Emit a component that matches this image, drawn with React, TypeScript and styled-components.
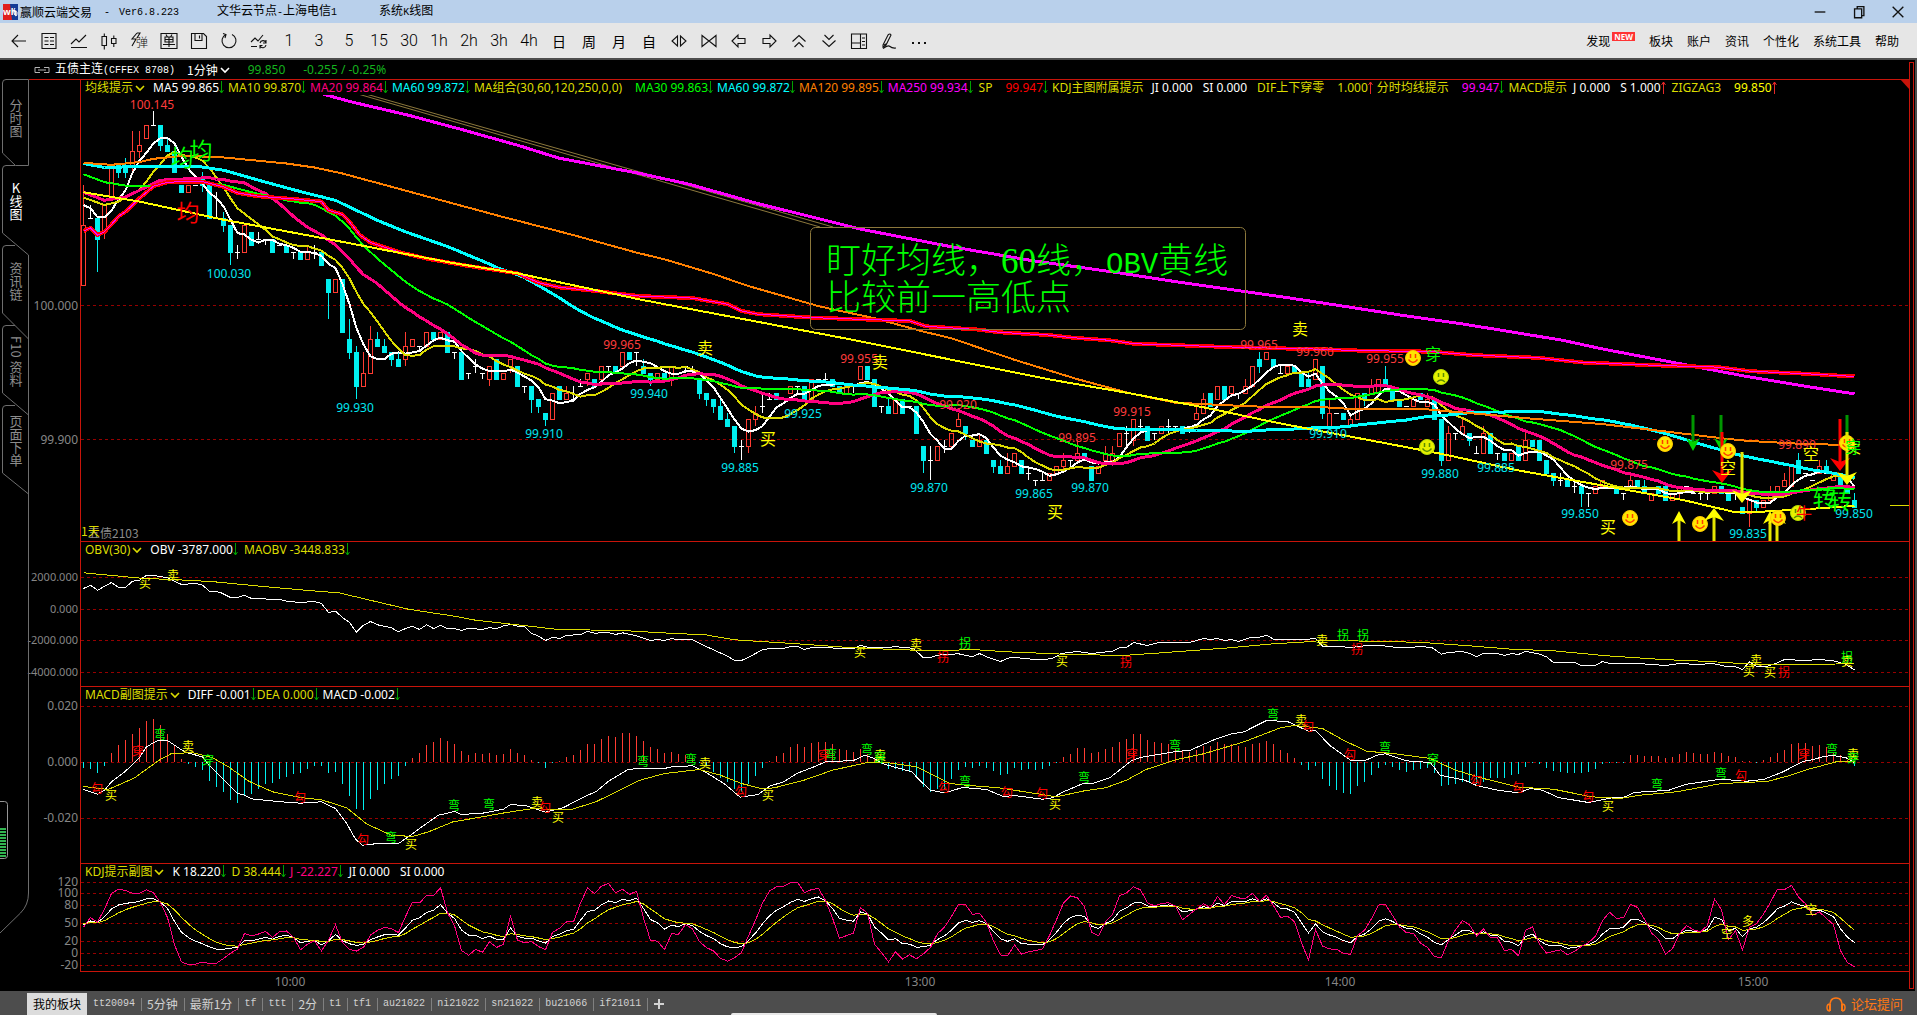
import React from "react";
import styled, { createGlobalStyle, css } from "styled-components";

const UI_FONT = `"Noto Sans", "Noto Sans CJK SC", sans-serif`;
const CJK_FONT = `"Noto Sans CJK SC", sans-serif`;
const MONO_FONT = `"Liberation Mono", "Noto Sans CJK SC", monospace`;
const SERIF_FONT = `"Liberation Serif", "Noto Sans CJK SC", serif`;

const RED = "#c8140a";
const UP = "#ff3c32";
const DOWN = "#00f0f0";
const OLIVE = "#dcdc00";
const GREEN = "#00ff00";
const YELLOW = "#ffff00";
const PINK = "#ff0080";
const MAGENTA = "#ff00ff";
const CYAN = "#00ffff";
const ORANGE = "#ff8000";
const WHITE = "#ffffff";
const PURE_RED = "#ff0000";

/* ---------- market data ---------- */

// One bar a minute, in ticks of 0.005 above 99.800: open, close, high, low.
type Bar = number[];
const BARS: Bar[] = [
  [43, 52, 58], [53, 53, 55, 53], [53, 50, 53, 45], [51, 55, 55, 50], [56, 61], [61, 60, 61, 59], [61, 60, 62, 59],
  [61, 63, 66, 60], [63, 64, 66, 62], [65, 67], [67, 67, 69, 67], [67, 64, 67, 63], [64, 63, 65, 63], [63, 60],
  [58, 57], [57, 58], [58, 58], [59, 58, 60, 57], [58, 53], [53, 53, 57, 53], [53, 52, 54, 51], [52, 48, 52, 46],
  [48, 48, 49, 47], [48, 52], [51, 49], [50, 50, 51, 50], [50, 50, 50, 49], [50, 48], [49, 49], [49, 48],
  [48, 48, 48, 47], [48, 47], [47, 48, 49, 47], [48, 48, 49, 47], [48, 46], [44, 42, 44, 38], [42, 44], [44, 36],
  [35, 33, 38, 32], [33, 28, 34, 26], [28, 30, 33, 28], [30, 35, 37, 30], [35, 34, 36, 34], [34, 33, 35, 33],
  [33, 32, 33, 31], [32, 31, 33, 31], [32, 34, 36, 31], [34, 35], [34, 34, 34, 33], [34, 36], [36, 35], [35, 36],
  [36, 33], [33, 33, 33, 32], [33, 29], [30, 30, 30, 29], [31, 31, 32, 30], [30, 30, 30, 29], [29, 31, 31, 28],
  [32, 29], [29, 30], [31, 32, 32, 30], [31, 28], [28, 28, 28, 27], [28, 26, 28, 24], [26, 25, 26, 24],
  [24, 23, 24, 22], [23, 27], [28, 26], [26, 27, 28, 26], [26, 26, 28, 26], [28, 28, 29, 28], [29, 30, 30, 28],
  [29, 28], [29, 31, 31, 28], [31, 31, 31, 30], [31, 30], [31, 33], [33, 32], [33, 33, 33, 31], [31, 30, 32, 30],
  [30, 29, 30, 28], [29, 30], [30, 29], [29, 31, 31, 28], [30, 30], [31, 31, 31, 30], [30, 30, 31, 30],
  [29, 27, 29, 26], [27, 26, 27, 25], [26, 25, 26, 24], [25, 23, 26, 23], [23, 22, 24, 22], [22, 19, 22, 18],
  [19, 19, 20, 17], [19, 23, 23, 18], [23, 24, 25, 22], [25, 25, 27, 24], [26, 26, 27, 26], [27, 26], [26, 26],
  [27, 28], [28, 28, 28, 27], [28, 26], [26, 29], [29, 29], [29, 29, 30, 29], [29, 28], [28, 27], [27, 28],
  [28, 28, 28, 27], [29, 31], [31, 29], [29, 25], [25, 25, 25, 24], [25, 24, 26, 24], [24, 26], [26, 24], [25, 25],
  [25, 21], [19, 17, 19, 15], [17, 17, 19, 14], [17, 19], [19, 19, 20, 18], [19, 21], [22, 23, 24, 22],
  [22, 21, 22, 20], [20, 19], [19, 20, 21, 19], [20, 18], [17, 16, 17, 15], [16, 15, 17, 15], [15, 16, 18, 15],
  [16, 18], [17, 15], [15, 15, 16, 14], [14, 14, 14, 13], [14, 14, 15, 14], [14, 15], [15, 16], [16, 17, 18, 15],
  [17, 17, 17, 16], [17, 18, 20, 17], [18, 17], [16, 14], [15, 16], [17, 18, 19, 17], [17, 18, 19, 17], [19, 21],
  [21, 21, 22, 19], [20, 23, 23, 19], [22, 22, 23, 21], [22, 20], [21, 21, 21, 20], [21, 22], [22, 22, 23, 21],
  [22, 22, 22, 21], [22, 21], [22, 22, 22, 21], [23, 24, 25, 23], [24, 26, 27, 24], [27, 25], [26, 28], [28, 26],
  [27, 28], [27, 27, 27, 26], [27, 28, 29, 27], [28, 31], [32, 31, 33, 30], [32, 33], [32, 31], [30, 30, 31, 30],
  [30, 31], [31, 30], [30, 28], [29, 28, 30, 28], [29, 32], [31, 24, 31, 23], [22, 24, 26, 22], [24, 24], [24, 23],
  [22, 23, 24, 22], [23, 27], [27, 26, 27, 25], [27, 28, 29, 27], [27, 29], [29, 28, 31, 28], [28, 26], [26, 25],
  [25, 25], [25, 26], [27, 26], [25, 26, 27, 25], [26, 23], [23, 17, 23, 16], [17, 21, 22, 17], [21, 21, 21, 20],
  [21, 22, 23, 21], [21, 20, 21, 19], [18, 18, 19, 18], [18, 21, 22, 18], [21, 18], [18, 18, 18, 17], [18, 17],
  [17, 18], [19, 17], [17, 20, 21, 17], [20, 19], [20, 17], [17, 15], [15, 14, 15, 13], [14, 14, 15, 13], [14, 13],
  [13, 13, 14, 12], [13, 12, 13, 10], [12, 12, 12, 10], [12, 13], [13, 14], [13, 13], [13, 12], [12, 12, 12, 11],
  [13, 14, 15, 13], [14, 13], [13, 12, 14, 12], [11, 12], [13, 12], [13, 11], [11, 12], [12, 13, 13, 11],
  [13, 13, 13, 12], [12, 12], [12, 12, 12, 11], [12, 12, 12, 11], [12, 13], [13, 12], [12, 11], [12, 12, 12, 11],
  [10, 9], [9, 11, 11, 7], [11, 10, 11, 9], [10, 11], [11, 12, 13, 11], [12, 13], [13, 14, 15, 13], [13, 16],
  [17, 15, 18, 15], [15, 15], [14, 14], [15, 16, 17, 15], [16, 15, 17, 15], [14, 15], [15, 13], [13, 12],
  [11, 10, 12, 10],
];

const CANDLES = BARS.map(([open, close, high, low]) => ({
  open,
  close,
  high: high ?? Math.max(open, close),
  low: low ?? Math.min(open, close),
}));

// Knots are flat lists of bar index, value.
const MA_SEED: Record<number, number[]> = {
  5: [0, 55, 1, 54.5, 2, 53.2, 3, 53.2],
  10: [0, 56.1, 3, 55, 5, 55.5, 8, 57.3],
  20: [0, 56.9, 3, 55.7, 6, 56.2, 9, 57.7, 11, 58.7, 18, 59.1],
  30: [0, 59.6, 3, 58.4, 6, 57.9, 10, 57.9, 13, 58.4, 17, 58.4, 20, 58, 24, 56.9, 28, 56],
  60: [0, 61.2, 3, 60.6, 10, 60.8, 16, 60.8, 20, 60.2, 25, 58.7, 31, 57, 36, 55.7, 42, 52.7, 46, 51, 52, 48.8, 58, 46.2],
};
const MA120 = [0, 61.3, 4, 61, 8, 61.4, 10, 61.9, 14, 62.3, 19, 62.2, 24, 61.7, 29, 61.2, 33, 60.6, 37, 59.7, 43, 58, 49, 56.3, 60, 53.2, 70, 50.5, 79, 47.9, 83, 46.9, 90, 44.7, 95, 42.9, 100, 41.4, 105, 39.9, 113, 38.1, 120, 36.1, 124, 35.1, 133, 31.9, 142, 29, 149.5, 26.9, 156, 25.5, 163.5, 25.1, 170.5, 24.8, 176, 24.9, 182, 24.5, 192, 24.5, 198.5, 23.9, 207, 23.1, 217, 22.3, 226, 21.2, 234, 20.2, 237.6, 19.8, 246.3, 19.3, 253, 19.2];
const MA250 = [33, 72, 34.4, 71.5, 38.2, 70.4, 46.4, 68.4, 53.9, 66.3, 62.1, 63.9, 67.9, 62, 79.5, 59.7, 86.5, 58.1, 96.4, 55.2, 111, 51.4, 123.8, 48.8, 135.5, 46.7, 147.1, 45, 157, 43.4, 170.5, 41.4, 177.5, 40.3, 188, 38.6, 196.7, 37.3, 203.2, 36.2, 211.3, 34.8, 217.1, 33.5, 227.6, 31.4, 237.6, 29.4, 246.3, 27.9, 253, 26.8];
const AVERAGE_PRICE = [0, 51.1, 1, 51.6, 2, 50.5, 3, 51, 4, 52.1, 5, 53.3, 6, 54, 8, 56, 10, 57.8, 12, 58.4, 15, 58.5, 17, 58.5, 20, 57.7, 22, 56.8, 25, 56.3, 30, 55.9, 34, 55.5, 35, 54.2, 37, 53.6, 38, 52.5, 39.5, 50.5, 41, 49.4, 45, 48, 49, 47, 55, 45.9, 62, 44.8, 65, 43.4, 68, 42.7, 72, 42.3, 79.5, 41.4, 87, 41.1, 92, 40.2, 94, 39.2, 96.4, 38.7, 104, 38.2, 112.2, 37.9, 118, 37.7, 120.3, 36.9, 127.9, 36.4, 130.8, 36, 137.8, 35.6, 141.3, 35.2, 146.6, 34.8, 150, 34.3, 161, 33.9, 171, 33.6, 176.3, 33.5, 181, 33.3, 192.7, 33.1, 198.5, 32.6, 207.8, 32.2, 214.2, 31.5, 226.5, 31, 233.5, 30.8, 238.1, 30.2, 246.3, 29.8, 253, 29.4];
const ZIGZAG = [0, 56.9, 8, 55.5, 20, 52.8, 35, 49.9, 53, 46.3, 62, 44.8, 79.5, 40.9, 109.8, 34.9, 137.8, 29, 149.5, 26.9, 160, 24.8, 170.5, 22.5, 182.2, 20.2, 193.8, 17.9, 204.9, 15.4, 218.3, 12.9, 228.8, 10.9, 235.8, 9.2, 239.3, 9.2, 247.5, 9.7, 253, 10.1];

const OBV = [0, 63, 1, 73, 2, 58, 4, 81, 5, 66, 6, 66, 7, 85, 8, 88, 9, 103, 10, 102, 12, 95, 14, 75, 16, 78, 17, 73, 18, 55, 19.5, 52, 21, 36, 22, 36, 23, 43, 24, 33, 28, 30, 29, 25, 31, 21, 33, 24, 34, 18, 35, -9, 36, -5, 37, -24, 38, -39, 39, -68, 40, -47, 41, -36, 42, -46, 44, -55, 45, -67, 46, -57, 47, -50, 48, -60, 49, -46, 50, -57, 51, -48, 52, -57, 53, -57, 54, -63, 55, -56, 57, -60, 58, -54, 59, -58, 60, -49, 61, -45, 62, -50, 63, -52, 64, -71, 65, -80, 66, -93, 67, -83, 68, -87, 69, -78, 71, -75, 72, -66, 73, -71, 75, -69, 76, -75, 77, -70, 79, -79, 81, -93, 82, -90, 83, -93, 84, -87, 85, -91, 87, -91, 88.3, -105, 90, -121, 92, -140, 93, -153, 94, -153, 95, -143, 96, -132, 97, -121, 98, -117, 100, -117, 101, -111, 102, -111, 103, -120, 104, -114, 110, -117, 111, -108, 112, -113, 115, -114, 116, -111, 117, -114, 118.5, -116, 120, -145, 121, -144, 122, -137, 125, -133, 127, -142, 128, -132, 129, -142, 131, -156, 132, -146, 133, -144, 136, -150, 137.5, -150, 138.6, -145, 139.7, -132, 142, -126, 144, -132, 147, -125, 148, -115, 149, -114, 150, -99, 152, -108, 153.6, -99, 158, -99, 160, -87, 161, -90, 162, -87, 163, -93, 164, -90, 165, -96, 166.6, -85, 168, -83, 169, -77, 170, -89, 174, -91, 176, -87, 177, -110, 179.4, -111, 181, -114, 183.4, -108, 185.3, -108, 187.6, -114, 189.5, -114, 191, -111, 192.6, -114, 194, -134, 195, -129, 197, -126, 198, -132, 199, -141, 200, -132, 202, -132, 203, -138, 204, -132, 205, -135, 206, -125, 208, -134, 209, -142, 210, -159, 213, -159, 214, -168, 216, -168, 217, -156, 218, -162, 222, -162, 226, -168, 228, -162, 230.6, -165, 232.8, -162, 234.5, -170, 236, -172, 237, -180, 238, -157, 239, -170, 240.4, -171, 242, -160, 243, -150, 246, -153, 248, -150, 250, -154, 251.7, -164, 253, -181];
const MAOBV = [0, 110, 8.2, 94, 14.7, 88, 18.7, 83, 27.2, 66, 33.4, 55, 36.5, 50, 41.3, 26, 46.4, 1, 53, -20, 56, -32, 63.3, -49, 67.8, -60, 76.9, -63, 85.2, -73, 88.6, -75, 93, -91, 102, -103, 110, -115, 117, -121, 122, -124, 127, -120, 132, -127, 140, -134, 148.5, -138, 154, -130, 163, -116, 170, -103, 174, -98, 177, -93, 187, -96, 192, -100, 198, -109, 204, -119, 210, -124, 217.6, -139, 225.5, -150, 232.3, -156, 239, -165, 246, -166, 253, -162];

const HISTOGRAM = [-16, -20, -31, -10, 30, 52, 67, 87, 104, 124, 130, 112, 87, 54, 12, -3, -14, -22, -56, -74, -88, -112, -122, -100, -94, -80, -65, -61, -50, -44, -35, -31, -20, -10, -10, -31, -28, -65, -100, -140, -143, -110, -83, -65, -50, -41, -10, 13, 28, 53, 61, 73, 64, 57, 34, 24, 28, 25, 28, 22, 25, 40, 28, 22, 7, 0, -16, 0, 4, 16, 24, 37, 55, 55, 70, 79, 76, 88, 88, 79, 64, 46, 40, 28, 31, 25, 22, 13, 0, -10, -27, -46, -59, -80, -88, -65, -41, -16, 4, 19, 28, 46, 55, 46, 58, 61, 61, 55, 40, 37, 31, 40, 25, 12, -3, -20, -20, -25, -28, -43, -73, -88, -80, -80, -50, -22, -13, -16, -10, -16, -25, -37, -35, -16, -22, -20, -22, -20, -10, 0, 16, 25, 43, 43, 28, 31, 40, 46, 61, 70, 85, 85, 67, 61, 58, 55, 40, 37, 31, 37, 49, 49, 61, 55, 55, 49, 46, 55, 58, 64, 55, 37, 28, 13, -7, -22, -10, -49, -70, -83, -92, -94, -70, -58, -37, -16, -7, -13, -22, -28, -22, -19, -16, -31, -70, -67, -64, -58, -58, -64, -58, -46, -46, -46, -37, -34, -13, 0, -4, -16, -25, -28, -31, -31, -31, -28, -19, -4, 0, 0, 0, 22, 22, 19, 19, 19, 13, 16, 25, 31, 28, 25, 25, 31, 28, 19, 16, 5, 4, 0, 7, 16, 28, 37, 55, 58, 58, 49, 52, 46, 28, 22, 7, -10];
const DIFF = [0, -81, 2, -95, 3, -83, 4, -58, 6, -26, 8, 15, 9, 47, 10.5, 65, 12, 66, 13, 52, 14.6, 30, 17, 17, 18, -10, 20, -50, 22, -93, 23, -98, 24, -109, 27.7, -117, 31, -122, 34, -118, 36, -138, 37.6, -183, 38.8, -228, 39.8, -248, 41.7, -244, 45, -243, 46.4, -223, 48, -198, 50.7, -158, 53, -147, 54, -156, 57, -152, 60, -140, 61, -126, 63.3, -130, 66, -149, 68.5, -136, 72, -98, 73.2, -88, 75, -56, 77.8, -21, 79.5, -17, 83, -18, 84, -13, 87, -10, 88.8, -28, 91.7, -66, 93.8, -104, 96.4, -96, 98, -71, 100, -58, 102, -32, 104.6, -11, 106, 2, 110, 6, 111.6, 22, 112.7, 14, 114.5, -6, 117, -20, 118.3, -28, 119.7, -58, 121, -83, 123, -91, 125.6, -75, 129, -81, 131.4, -102, 133, -99, 137, -110, 138.4, -106, 140, -88, 142.8, -63, 144, -64, 146.6, -46, 149.8, 7, 151, 15, 156, 33, 158, 36, 161.7, 70, 163.8, 85, 165.8, 92, 169, 126, 172, 123, 175, 94, 176, 97, 178, 52, 181, 7, 183, 5, 184.8, 22, 186, 26, 189, 5, 192.4, 0, 193.8, -38, 197.3, -53, 199, -69, 202, -83, 205, -91, 206.7, -78, 208.4, -83, 210.7, -105, 215, -120, 218.3, -106, 220, -105, 221.5, -90, 226.5, -83, 228.8, -66, 233.8, -50, 237.6, -56, 240, -51, 242.8, -28, 245.7, 4, 247, 8, 248.6, 18, 250, 21, 251.8, 14, 253, 0];
const DEA = [0, -72, 3.5, -81, 5.5, -63, 7.3, -46, 10.8, 7, 12.5, 26, 15.5, 30, 18.4, 15, 20.7, -13, 23.6, -56, 27, -88, 31, -105, 34, -112, 37.6, -136, 40.5, -185, 44, -218, 47, -222, 49.3, -208, 52.8, -178, 57, -163, 60.4, -150, 64, -139, 69.7, -141, 73.2, -118, 79.5, -53, 83, -33, 88, -21, 91, -38, 94, -63, 97, -79, 98.7, -76, 102.8, -54, 107, -23, 112, 0, 115, -1, 119, -13, 123.8, -63, 126, -68, 130.8, -76, 139, -103, 143, -85, 146, -76, 149, -53, 151.8, -21, 156, 8, 160, 26, 165.8, 62, 171, 104, 173, 111, 177, 102, 180, 67, 183.3, 34, 187.4, 26, 192.4, 12, 196, -23, 200, -48, 205, -74, 210, -80, 215.4, -103, 219.5, -108, 222.4, -98, 227.6, -88, 234, -63, 240.5, -57, 243.4, -41, 246.3, -21, 250.4, 2, 253, 4];

/* ---------- scales and series helpers ---------- */

const barX = (i: number) => 2.5 + 7 * i;
const priceY = (ticks: number) => 478.5 - 6.7 * ticks;
const obvY = (v: number) => 52.5 - v / 3;
const macdY = (v: number) => 60.5 - v / 3;
const kdjY = (v: number) => 74.5 - 0.6 * v;

const pairs = (flat: number[]) =>
  flat.reduce<number[][]>((out, v, i) => (i % 2 ? out : [...out, [v, flat[i + 1]]]), []);

const interpolate = (knots: number[][], i: number) => {
  const next = knots.findIndex(([k]) => k >= i);
  if (next < 0) return knots[knots.length - 1][1];
  if (next === 0) return knots[0][1];
  const [[x0, y0], [x1, y1]] = [knots[next - 1], knots[next]];
  return y0 + ((y1 - y0) * (i - x0)) / (x1 - x0);
};

const movingAverage = (n: number) => {
  const seed = pairs(MA_SEED[n]);
  return CANDLES.map((_, i) => {
    if (i < n - 1) return [i, interpolate(seed, i)];
    const total = CANDLES.slice(i - n + 1, i + 1).reduce((sum, c) => sum + c.close, 0);
    return [i, total / n];
  });
};

const stochastic = () => {
  const k: number[][] = [[0, 48]];
  const d: number[][] = [[0, 50]];
  const j: number[][] = [[0, 44]];
  for (let i = 1; i < CANDLES.length; i++) {
    const window = CANDLES.slice(Math.max(0, i - 8), i + 1);
    const high = Math.max(...window.map((c) => c.high));
    const low = Math.min(...window.map((c) => c.low));
    const rsv = high === low ? 50 : (100 * (CANDLES[i].close - low)) / (high - low);
    const kv = (2 * k[i - 1][1] + rsv) / 3;
    const dv = (2 * d[i - 1][1] + kv) / 3;
    k.push([i, kv]);
    d.push([i, dv]);
    j.push([i, 3 * kv - 2 * dv]);
  }
  return { k, d, j };
};
const KDJ = stochastic();

/* ---------- styled parts ---------- */

const Global = createGlobalStyle`
  * { box-sizing: border-box; }
  body { margin: 0; background: #000; }
  button { font: inherit; color: inherit; background: none; border: 0; padding: 0; cursor: pointer; }
`;

const Page = styled.div`
  min-height: 100vh;
  display: flex;
  flex-direction: column;
  position: relative;
  overflow: hidden;
  background: #000;
  color: #fff;
  font: 12px/15px ${UI_FONT};
  white-space: nowrap;
`;

const TitleBar = styled.header`
  display: flex;
  align-items: center;
  height: 23px;
  padding-left: 3px;
  background: #b9d0eb;
  color: #000;
  font: 12px/16px ${CJK_FONT};
`;
const TitleText = styled.span<{ $gap: number }>`
  margin-left: ${(p) => p.$gap}px;
`;
const Half = styled.span`
  font-family: ${MONO_FONT};
  font-size: 10px;
`;
const WindowButtons = styled.div`
  display: flex;
  margin-left: auto;
`;
const WindowButton = styled.button`
  display: grid;
  place-items: center;
  width: 39px;
  height: 23px;
`;

const Toolbar = styled.nav`
  display: flex;
  align-items: center;
  height: 37px;
  padding: 0 18px 0 4px;
  background: #e6e6e6;
  border-bottom: 2px solid #4d4d4d;
  color: #000;
`;
const ToolButton = styled.button<{ $cjk?: boolean }>`
  display: grid;
  place-items: center;
  width: 30px;
  height: 32px;
  font: ${(p) => (p.$cjk ? `14px/20px ${CJK_FONT}` : `300 16px/20px Roboto, sans-serif`)};
`;
const Menu = styled.div`
  display: flex;
  align-items: center;
  gap: 14px;
  margin-left: auto;
  font: 12px/18px ${CJK_FONT};
`;
const MenuButton = styled.button`
  display: flex;
`;
const NewBadge = styled.span`
  height: 9px;
  margin-left: 2px;
  padding: 0 2px;
  background: #ff3333;
  color: #fff;
  font: 700 8px/9px ${UI_FONT};
`;

const Workspace = styled.div`
  display: flex;
  flex: 1;
  border-right: 2px solid #4d4d4d;
`;
const Sidebar = styled.aside`
  position: relative;
  width: 29px;
  padding-top: 19px;
`;
const SideFrame = styled.svg`
  position: absolute;
  left: 0;
  top: 0;
`;
const SideTab = styled.button<{ $active?: boolean; $upright?: boolean; $h: number }>`
  position: relative;
  display: flex;
  align-items: center;
  justify-content: center;
  width: 29px;
  height: ${(p) => p.$h}px;
  padding: 0 0 8px 2px;
  writing-mode: vertical-rl;
  ${(p) => p.$upright && css`text-orientation: upright;`}
  font: 13px/16px ${CJK_FONT};
  color: ${(p) => (p.$active ? "#fff" : "#8c8c8c")};
`;

const Main = styled.main`
  flex: 1;
  min-width: 0;
`;
const SymbolRow = styled.div`
  display: flex;
  align-items: center;
  height: 19px;
  padding-left: 5px;
  font: 12px/16px ${CJK_FONT};
`;
const PeriodButton = styled.button`
  display: flex;
  align-items: center;
  gap: 2px;
  margin-left: 12px;
`;
const Quote = styled.span`
  margin-left: 18px;
  color: #14b41e;
  font-family: ${UI_FONT};
`;

const Panel = styled.section`
  display: grid;
  grid-template-columns: 51px 1fr;
  &:first-of-type { border-top: 1px solid ${RED}; }
`;
const Gutter = styled.svg`
  display: block;
  width: 51px;
  height: 1px;
  overflow: visible;
`;
const PanelBody = styled.div<{ $topLine?: boolean }>`
  min-width: 0;
  border-left: 1px solid ${RED};
  ${(p) => p.$topLine && css`border-top: 1px solid ${RED};`}
`;
const Legend = styled.div`
  display: flex;
  align-items: center;
  height: 15px;
  padding-left: 4px;
`;
const LegendButton = styled.button`
  display: flex;
  align-items: center;
  gap: 2px;
  margin-right: 8px;
  color: ${OLIVE};
`;
const LegendItem = styled.span<{ $color: string; $after?: number }>`
  display: flex;
  align-items: center;
  color: ${(p) => p.$color};
  margin-right: ${(p) => p.$after ?? 1}px;
`;
const Plot = styled.svg`
  display: block;
  width: 100%;
`;
const TimeAxis = styled.div`
  margin-left: 51px;
  border-top: 1px solid ${RED};
`;
const Rail = styled.div`
  position: relative;
  width: 5px;
  margin: 2px 1px 2px 0;
  border: 1px solid ${RED};
`;
const Corner = styled.svg`
  position: absolute;
  right: 3px;
  top: 16px;
`;

const BottomBar = styled.footer`
  display: flex;
  align-items: stretch;
  height: 24px;
  padding: 2px 14px 0 27px;
  background: #4d4d4d;
  color: #d2d2d2;
`;
const BoardTab = styled.button<{ $cjk?: boolean; $active?: boolean }>`
  display: flex;
  align-items: center;
  padding: 0 6px;
  font-family: ${(p) => (p.$cjk ? CJK_FONT : MONO_FONT)};
  font-size: ${(p) => (p.$cjk ? 12 : 10)}px;
  line-height: 18px;
  ${(p) =>
    p.$active
      ? css`background: #dcdcdc; color: #000;`
      : css`
          &::after {
            content: "";
            width: 1px;
            height: 13px;
            margin: 0 -7px 0 6px;
            background: #808080;
          }
        `}
`;
const AddButton = styled.button`
  display: grid;
  place-items: center;
  width: 24px;
`;
const Forum = styled.a`
  display: flex;
  align-items: center;
  gap: 5px;
  margin-left: auto;
  color: #ff7814;
  font: 13px/18px ${CJK_FONT};
  text-decoration: none;
`;
const DockHandle = styled.div`
  position: absolute;
  left: 731px;
  bottom: 0;
  width: 206px;
  height: 2px;
  background: #e8e8e8;
  border-radius: 2px 2px 0 0;
`;

/* ---------- small drawings ---------- */

const Icon = ({ children, size = 18 }: { children: React.ReactNode; size?: number }) => (
  <svg width={size} height={size} viewBox="0 0 18 18" fill="none" stroke="#111" strokeWidth="1.1">
    {children}
  </svg>
);

const Chevron = ({ color }: { color: string }) => (
  <svg width="10" height="8" fill="none" stroke={color} strokeWidth="1.6">
    <path d="M1 2l4 4 4-4" />
  </svg>
);

const Trend = ({ up }: { up?: boolean }) => (
  <svg width="5" height="13" fill="none" stroke={up ? "#e62828" : "#00a000"} strokeWidth="1">
    <path d={up ? "M2.5 1v12M0.5 4l2-3 2 3" : "M2.5 0v12M0.5 9l2 3 2-3"} />
  </svg>
);

/* ---------- chart pieces ---------- */

type LineProps = { knots: number[][]; y: (v: number) => number; color: string; width?: number };
const Line = ({ knots, y, color, width = 1 }: LineProps) => (
  <polyline
    points={knots.map(([i, v]) => `${barX(i)},${Math.round(y(v) * 10) / 10}`).join(" ")}
    fill="none"
    stroke={color}
    strokeWidth={width}
    shapeRendering="crispEdges"
  />
);

const Grid = ({ rows }: { rows: number[] }) => (
  <g stroke="#960000" strokeDasharray="3 3" shapeRendering="crispEdges">
    {rows.map((y) => (
      <line key={y} x1="0" x2="100%" y1={y} y2={y} />
    ))}
  </g>
);

type Mark = [number, number, string, string];
const Marks = ({ list, size, font = CJK_FONT, dx = 81, dy }: { list: Mark[]; size: number; font?: string; dx?: number; dy: number }) => (
  <g fontFamily={font} fontSize={size} textAnchor="middle">
    {list.map(([x, y, text, color], i) => (
      <text key={i} x={x - dx} y={y - dy + Math.round(size * 0.4)} fill={color}>
        {text}
      </text>
    ))}
  </g>
);

const AxisLabels = ({ list, size = 12 }: { list: [number, string][]; size?: number }) => (
  <Gutter>
    <g fontFamily={UI_FONT} fontSize={size} fill="#868686" textAnchor="end">
      {list.map(([y, text]) => (
        <text key={text} x="49" y={y + 4}>
          {text}
        </text>
      ))}
    </g>
  </Gutter>
);

const Face = ({ x, y, sad, green }: { x: number; y: number; sad?: boolean; green?: boolean }) => {
  const ink = green ? "#5a8c00" : "#ff3c00";
  return (
    <g transform={`translate(${x - 81} ${y - 95})`}>
      <circle r="7.5" fill={green ? "#e6f000" : "#ffe600"} stroke={green ? "#b4dc00" : "#ffc800"} />
      <path d="M-2.5 -4v4M2.5 -4v4" stroke={ink} strokeWidth="1.5" />
      <path d={sad ? "M-4 5q4 -4 8 0" : "M-4.5 1.5q4.5 6 9 0"} fill="none" stroke={ink} strokeWidth="1.3" />
    </g>
  );
};

type ArrowProps = { x: number; from: number; to: number; color: string; shaft?: string; wing?: number; width?: number };
const Arrow = ({ x, from, to, color, shaft, wing = 7, width = 3 }: ArrowProps) => {
  const s = to > from ? -1 : 1;
  return (
    <g transform={`translate(${x - 81} -95)`}>
      <line y1={from} y2={to + s * 4} stroke={shaft ?? color} strokeWidth={width} />
      <path d={`M0 ${to}L${-wing} ${to + s * 13}L0 ${to + s * 9}L${wing} ${to + s * 13}Z`} fill={color} />
    </g>
  );
};

const Candles = () => (
  <g shapeRendering="crispEdges">
    {CANDLES.map((c, i) => {
      const x = 7 * i;
      const top = Math.round(priceY(Math.max(c.open, c.close)));
      const bottom = Math.round(priceY(Math.min(c.open, c.close)));
      const high = Math.round(priceY(c.high));
      const low = Math.round(priceY(c.low));
      if (c.open === c.close)
        return <path key={i} d={`M${x} ${top + 0.5}h5M${x + 2.5} ${high}V${low}`} stroke="#fff" fill="none" />;
      if (c.close < c.open)
        return (
          <g key={i} fill={DOWN}>
            <rect x={x + 2} y={high} width="1" height={low - high} />
            <rect x={x} y={top} width="5" height={bottom - top + 1} />
          </g>
        );
      return (
        <path
          key={i}
          d={`M${x + 0.5} ${top + 0.5}h4v${bottom - top}h-4zM${x + 2.5} ${high}V${top}M${x + 2.5} ${bottom}V${low}`}
          stroke={UP}
          fill="none"
        />
      );
    })}
  </g>
);

const LABEL_UP = "#ff3c3c";
const LABEL_DOWN = "#00e6f0";
const PRICE_MARKS: Mark[] = [
  [152, 104, "100.145", LABEL_UP], [229, 273, "100.030", LABEL_DOWN], [355, 407, "99.930", LABEL_DOWN],
  [544, 433, "99.910", LABEL_DOWN], [622, 344, "99.965", LABEL_UP], [649, 393, "99.940", LABEL_DOWN],
  [859, 358, "99.955", LABEL_UP], [740, 467, "99.885", LABEL_DOWN], [803, 413, "99.925", LABEL_DOWN],
  [958, 404, "99.920", LABEL_UP], [929, 487, "99.870", LABEL_DOWN], [1034, 493, "99.865", LABEL_DOWN],
  [1077, 437, "99.895", LABEL_UP], [1090, 487, "99.870", LABEL_DOWN], [1132, 411, "99.915", LABEL_UP],
  [1259, 344, "99.965", LABEL_UP], [1315, 351, "99.960", LABEL_UP], [1385, 358, "99.955", LABEL_UP],
  [1328, 433, "99.910", LABEL_DOWN], [1440, 473, "99.880", LABEL_DOWN], [1496, 467, "99.885", LABEL_DOWN],
  [1629, 464, "99.875", LABEL_UP], [1580, 513, "99.850", LABEL_DOWN], [1748, 533, "99.835", LABEL_DOWN],
  [1797, 444, "99.890", LABEL_UP], [1854, 513, "99.850", LABEL_DOWN],
];
const SIGNAL_MARKS: Mark[] = [
  [705, 348, "卖", YELLOW], [880, 362, "卖", YELLOW], [768, 439, "买", YELLOW], [1055, 512, "买", YELLOW],
  [1300, 329, "卖", YELLOW], [1433, 354, "穿", GREEN], [1608, 527, "买", YELLOW], [1728, 468, "空", YELLOW],
  [1811, 454, "空", YELLOW], [1853, 447, "卖", YELLOW], [1853, 447, "穿", GREEN], [1804, 513, "牛", PURE_RED],
];
const BIG_MARKS: Mark[] = [
  [182, 157, "均", GREEN], [201, 150, "均", GREEN], [188, 212, "均", PURE_RED],
  [1824, 497, "转", GREEN], [1840, 500, "转", GREEN],
];
const OBV_MARKS: Mark[] = [
  [145, 583, "买", YELLOW], [173, 575, "卖", YELLOW], [860, 652, "买", YELLOW], [916, 644, "卖", YELLOW],
  [943, 657, "拐", PURE_RED], [965, 643, "拐", GREEN], [1062, 661, "买", YELLOW], [1126, 662, "拐", PURE_RED],
  [1322, 640, "卖", YELLOW], [1343, 635, "拐", GREEN], [1357, 649, "拐", PURE_RED], [1363, 635, "拐", GREEN],
  [1756, 660, "卖", YELLOW], [1749, 671, "买", YELLOW], [1770, 672, "买", YELLOW], [1784, 672, "拐", PURE_RED],
  [1847, 661, "卖", YELLOW], [1847, 657, "拐", GREEN],
];
const MACD_MARKS: Mark[] = [
  [138, 751, "穿", PURE_RED], [160, 734, "弯", GREEN], [188, 746, "卖", YELLOW], [208, 760, "穿", GREEN],
  [97, 788, "勾", PURE_RED], [111, 795, "买", YELLOW], [300, 797, "勾", PURE_RED], [363, 839, "勾", PURE_RED],
  [391, 837, "弯", GREEN], [411, 844, "买", YELLOW], [454, 805, "弯", GREEN], [489, 804, "弯", GREEN],
  [537, 802, "卖", YELLOW], [545, 807, "勾", PURE_RED], [558, 817, "买", YELLOW], [643, 761, "弯", GREEN],
  [691, 759, "弯", GREEN], [705, 763, "卖", YELLOW], [741, 791, "勾", PURE_RED], [768, 795, "买", YELLOW],
  [824, 755, "穿", PURE_RED], [831, 754, "弯", GREEN], [867, 749, "弯", GREEN], [880, 755, "卖", YELLOW],
  [880, 757, "穿", GREEN], [944, 787, "勾", PURE_RED], [965, 781, "弯", GREEN], [1007, 792, "勾", PURE_RED],
  [1042, 793, "勾", PURE_RED], [1055, 804, "买", YELLOW], [1084, 777, "弯", GREEN], [1132, 754, "穿", PURE_RED],
  [1175, 745, "弯", GREEN], [1273, 714, "弯", GREEN], [1301, 720, "卖", YELLOW], [1308, 726, "勾", PURE_RED],
  [1350, 754, "勾", PURE_RED], [1385, 747, "弯", GREEN], [1433, 759, "穿", GREEN], [1476, 780, "勾", PURE_RED],
  [1518, 787, "勾", PURE_RED], [1588, 796, "勾", PURE_RED], [1608, 806, "买", YELLOW], [1657, 784, "弯", GREEN],
  [1721, 773, "弯", GREEN], [1741, 775, "勾", PURE_RED], [1804, 754, "穿", PURE_RED], [1832, 749, "弯", GREEN],
  [1853, 754, "卖", YELLOW], [1853, 758, "穿", GREEN],
];
const KDJ_MARKS: Mark[] = [[1727, 933, "空", YELLOW], [1748, 921, "多", YELLOW], [1811, 909, "空", YELLOW]];

/* ---------- toolbar contents ---------- */

const TOOLS: { label: string; text?: string; cjk?: boolean; icon?: React.ReactNode }[] = [
  { label: "后退", icon: <path d="M16 9H2M8 3L2 9l6 6" /> },
  { label: "列表", icon: <path d="M2 1.500h14v15H2zM4.500 5.500h4M10 5.500h4M4.500 9h4M10 9h4M4.500 12.500h4M10 12.500h4" /> },
  { label: "分时", icon: <path d="M1 12l5-5 3 3 7-7M1 15.500h16" /> },
  { label: "K线", icon: <path d="M2 4.500h4.500v9H2zM4.300 1.500v3M4.300 13.500v4M11.500 6.500H16v5h-4.500zM13.800 3.500v3M13.800 11.500v3.500" /> },
  {
    label: "闪电下单",
    icon: (
      <>
        <path d="M7 1L2 7h4l-4 7M7 1h3L7 6" />
        <text x="6" y="15" fontSize="12" fontFamily={CJK_FONT} fill="#111" stroke="none">弹</text>
      </>
    ),
  },
  { label: "下单", icon: <><path d="M1 1.500h16v15H1z" /><path d="M5 5h8v5H5zM5 7.500h8M3 12.500h12M9 5v10M6 2.500l1.500 2.500M12 2.500L10.500 5" /></> },
  { label: "保存", icon: <path d="M1.500 1.500h12l3 3v12h-15zM5 1.500v7h7v-7M9.500 3.500v3" /> },
  { label: "刷新", icon: <path d="M6 2.500a7 7 0 1 0 6 0M3 1.500l3 1-1 3.500" /> },
  { label: "重置", icon: <path d="M1 10l4-4 3 3 5-6M1 14.500h6M10 11a3.200 3.200 0 0 1 6-.5M16 13a3.200 3.200 0 0 1-6 1M16 8v3h-3M10 16.500v-3h2.500" /> },
  { label: "1分钟", text: "1" }, { label: "3分钟", text: "3" }, { label: "5分钟", text: "5" },
  { label: "15分钟", text: "15" }, { label: "30分钟", text: "30" }, { label: "1小时", text: "1h" },
  { label: "2小时", text: "2h" }, { label: "3小时", text: "3h" }, { label: "4小时", text: "4h" },
  { label: "日线", text: "日", cjk: true }, { label: "周线", text: "周", cjk: true },
  { label: "月线", text: "月", cjk: true }, { label: "自定义", text: "自", cjk: true },
  { label: "放宽", icon: <path d="M7.500 4v10L2 9zM10.500 4v10L16 9z" /> },
  { label: "收窄", icon: <path d="M2 3.500v11L9 9zM16 3.500v11L9 9z" /> },
  { label: "左移", icon: <path d="M2 9l6-6v3.500h7v5H8V15z" /> },
  { label: "右移", icon: <path d="M16 9l-6-6v3.500H3v5h7V15z" /> },
  { label: "上移", icon: <path d="M2.500 9.500L9 3.500l6.500 6M4.500 15L9 10.500l4.500 4.500" /> },
  { label: "下移", icon: <path d="M2.500 8.500L9 14.500l6.500-6M4.500 3L9 7.500 13.500 3" /> },
  { label: "布局", icon: <path d="M1.500 2h15v14.500h-15zM10.500 2v14.500M1.500 11h9M12 6h3M12 9.500h3M12 13h3" /> },
  { label: "画线", icon: <path d="M3 13L8 3q2-2 3 0L6 13l-3 2zM4 13l3-1.500M3 16.500q5-4 7-2t6 1.500" /> },
  { label: "更多", icon: <path d="M2 11h2M8 11h2M14 11h2" strokeWidth="2" /> },
];

const BOARDS = ["tt20094", "5分钟", "最新1分", "tf", "ttt", "2分", "t1", "tf1", "au21022", "ni21022", "sn21022", "bu21066", "if21011"];
const hasCjk = (s: string) => /[\u4e00-\u9fff]/.test(s);

type LegendEntry = { text: string; color: string; dir?: "up" | "down"; after?: number };
const MAIN_LEGEND: LegendEntry[] = [
  { text: "MA5 99.865", color: WHITE, dir: "down", after: 4 },
  { text: "MA10 99.870", color: OLIVE, dir: "down", after: 4 },
  { text: "MA20 99.864", color: PINK, dir: "down", after: 4 },
  { text: "MA60 99.872", color: CYAN, dir: "down", after: 4 },
  { text: "MA组合(30,60,120,250,0,0)", color: OLIVE, after: 13 },
  { text: "MA30 99.863", color: GREEN, dir: "down", after: 4 },
  { text: "MA60 99.872", color: CYAN, dir: "down", after: 4 },
  { text: "MA120 99.895", color: ORANGE, dir: "down", after: 4 },
  { text: "MA250 99.934", color: MAGENTA, dir: "down", after: 6 },
  { text: "SP", color: OLIVE, after: 13 },
  { text: "99.947", color: PURE_RED, dir: "down", after: 4 },
  { text: "KDJ主图附属提示", color: OLIVE, after: 8 },
  { text: "JI 0.000", color: WHITE, after: 10 },
  { text: "SI 0.000", color: WHITE, after: 10 },
  { text: "DIF上下穿零", color: OLIVE, after: 13 },
  { text: "1.000", color: OLIVE, dir: "up", after: 4 },
  { text: "分时均线提示", color: OLIVE, after: 13 },
  { text: "99.947", color: MAGENTA, dir: "down", after: 4 },
  { text: "MACD提示", color: OLIVE, after: 6 },
  { text: "J 0.000", color: WHITE, after: 10 },
  { text: "S 1.000", color: WHITE, dir: "up", after: 6 },
  { text: "ZIGZAG3", color: OLIVE, after: 13 },
  { text: "99.850", color: YELLOW, dir: "up" },
];

const LegendRow = ({ title, items }: { title: string; items: LegendEntry[] }) => (
  <Legend>
    <LegendButton>
      {title}
      <Chevron color={OLIVE} />
    </LegendButton>
    {items.map((it, i) => (
      <LegendItem key={i} $color={it.color} $after={it.after}>
        {it.text}
        {it.dir && <Trend up={it.dir === "up"} />}
      </LegendItem>
    ))}
  </Legend>
);

/* ---------- app ---------- */

export default function App() {
  return (
    <Page>
      <Global />
      <TitleBar>
        <svg width="15" height="16" viewBox="0 0 15 16">
          <rect width="15" height="16" fill="#e01e1e" />
          <path d="M7 0h8v16H9z" fill="#143c96" />
          <text x="0" y="11" fontSize="9" fontWeight="700" fontFamily={UI_FONT} fill="#fff">wh</text>
          <path d="M12 4q-2 2-1 5t2 3 1-3-3-1" fill="none" stroke="#fff" />
        </svg>
        <TitleText $gap={2}>赢顺云端交易</TitleText>
        <TitleText $gap={12}><Half>-</Half></TitleText>
        <TitleText $gap={9}><Half>Ver6.8.223</Half></TitleText>
        <TitleText $gap={38}>文华云节点<Half>-</Half>上海电信<Half>1</Half></TitleText>
        <TitleText $gap={42}>系统<Half>K</Half>线图</TitleText>
        <WindowButtons>
          <WindowButton aria-label="最小化"><Icon size={16}><path d="M3 9h12" strokeWidth="1.500" /></Icon></WindowButton>
          <WindowButton aria-label="还原"><Icon size={16}><path d="M4 5.500h8v10H4zM7 5V3h7.500v10H12.500" strokeWidth="1.500" /></Icon></WindowButton>
          <WindowButton aria-label="关闭"><Icon size={16}><path d="M3 3l12 12M15 3L3 15" strokeWidth="1.500" /></Icon></WindowButton>
        </WindowButtons>
      </TitleBar>

      <Toolbar>
        {TOOLS.map((t) => (
          <ToolButton key={t.label} aria-label={t.label} $cjk={t.cjk}>
            {t.text ?? <Icon>{t.icon}</Icon>}
          </ToolButton>
        ))}
        <Menu>
          <MenuButton>发现<NewBadge>NEW</NewBadge></MenuButton>
          <MenuButton>板块</MenuButton>
          <MenuButton>账户</MenuButton>
          <MenuButton>资讯</MenuButton>
          <MenuButton>个性化</MenuButton>
          <MenuButton>系统工具</MenuButton>
          <MenuButton>帮助</MenuButton>
        </Menu>
      </Toolbar>

      <Workspace>
        <Sidebar>
          <SideFrame width="29" height="900" fill="none" stroke="#6e6e6e">
            <path d="M28.500 105.500V19.500H6q-3.500 0-3.500 3.500V93l13 12.500h13" />
            <path d="M15 105.500H6q-3.500 0-3.500 3.500V173l26 22V265" />
            <path d="M15 185.500H6q-3.500 0-3.500 3.500V253l26 26V345" />
            <path d="M15 265.500H6q-3.500 0-3.500 3.500V333l26 22" />
            <path d="M15 345.500H6q-3.500 0-3.500 3.500V413l26 21" />
            <path d="M28.500 265V833q0 12-8 20L0 873" />
            <rect x="-4.500" y="741.500" width="12" height="57" rx="3" stroke="#969696" />
            <path d="M3 768v30" stroke="#32b450" strokeWidth="6" strokeDasharray="2 1" />
          </SideFrame>
          <SideTab $h={86} $upright>分时图</SideTab>
          <SideTab $h={80} $upright $active>K线图</SideTab>
          <SideTab $h={80} $upright>资讯链</SideTab>
          <SideTab $h={80}>F10 资料</SideTab>
          <SideTab $h={80} $upright>页面下单</SideTab>
        </Sidebar>

        <Main>
          <SymbolRow>
            <svg width="16" height="8" fill="none" stroke="#b4b4b4"><path d="M6 1.500H1v5h5M10 1.500h5v5h-5M4 4h8" /></svg>
            <TitleText $gap={5}>五债主连<Half>(CFFEX 8708)</Half></TitleText>
            <PeriodButton>1分钟<Chevron color={WHITE} /></PeriodButton>
            <Quote>99.850</Quote>
            <Quote>-0.255 / -0.25%</Quote>
          </SymbolRow>

          <Panel>
            <AxisLabels list={[[226, "100.000"], [360, "99.900"]]} />
            <PanelBody>
              <LegendRow title="均线提示" items={MAIN_LEGEND} />
              <Plot height="446">
                <Grid rows={[210.5, 344.5]} />
                <Candles />
                <path d="M277 -1L739 132M285 -1L752 132" stroke="#8c783c" fill="none" />
                <Line knots={movingAverage(5)} y={priceY} color={WHITE} width={2} />
                <Line knots={movingAverage(10)} y={priceY} color={OLIVE} width={2} />
                <Line knots={movingAverage(20)} y={priceY} color={PINK} width={3} />
                <Line knots={movingAverage(30)} y={priceY} color={GREEN} width={2} />
                <Line knots={movingAverage(60)} y={priceY} color={CYAN} width={3} />
                <Line knots={pairs(MA120)} y={priceY} color={ORANGE} width={2} />
                <Line knots={pairs(MA250)} y={priceY} color={MAGENTA} width={3} />
                <Line knots={pairs(AVERAGE_PRICE)} y={priceY} color={PURE_RED} width={4} />
                <Line knots={pairs(AVERAGE_PRICE)} y={priceY} color={MAGENTA} />
                <Line knots={pairs(ZIGZAG)} y={priceY} color={YELLOW} width={2} />
                <rect x="729.500" y="132.500" width="435" height="102" rx="5" fill="none" stroke="#8c783c" />
                <g fill={GREEN} fontFamily={CJK_FONT} fontSize="35" fontWeight="300">
                  <text x="745" y="178">
                    盯好均线，
                    <tspan fontFamily={SERIF_FONT}>60</tspan>线，
                    <tspan fontFamily={MONO_FONT} fontSize="29">OBV</tspan>黄线
                  </text>
                  <text x="745" y="215">比较前一高低点</text>
                </g>
                <Marks list={PRICE_MARKS} size={12} font={UI_FONT} dy={95} />
                <Arrow x={1693} from={415} to={451} color="#00d200" shaft="#009600" />
                <Arrow x={1721} from={415} to={451} color="#00d200" shaft="#009600" />
                <Arrow x={1722} from={432} to={483} color={PURE_RED} wing={10} />
                <Arrow x={1840} from={419} to={471} color={PURE_RED} wing={10} />
                <Arrow x={1847} from={415} to={451} color="#00d200" shaft="#009600" />
                <Face x={1413} y={358} />
                <Face x={1441} y={377} sad green />
                <Face x={1427} y={447} green />
                <Face x={1665} y={444} />
                <Face x={1728} y={451} />
                <Face x={1630} y={518} />
                <Face x={1700} y={524} />
                <Face x={1798} y={513} sad green />
                <Face x={1847} y={443} />
                <Arrow x={1742} from={452} to={503} color={YELLOW} wing={10} shaft="#e6e600" />
                <Arrow x={1847} from={432} to={485} color={YELLOW} wing={10} shaft="#e6e600" />
                <Arrow x={1679} from={541} to={511} color={YELLOW} shaft="#e6e600" />
                <Arrow x={1714} from={541} to={508} color={YELLOW} wing={10} shaft="#e6e600" />
                <Arrow x={1770} from={541} to={511} color={YELLOW} shaft="#e6e600" />
                <Arrow x={1777} from={541} to={511} color={YELLOW} wing={9} shaft="#e6e600" />
                <Face x={1778} y={518} />
                <Marks list={SIGNAL_MARKS} size={16} dy={95} />
                <Marks list={BIG_MARKS} size={23} dy={95} />
                <g fontFamily={CJK_FONT} fontSize="12">
                  <text x="7" y="443" fill="#8c8c8c">五债2103</text>
                  <text x="0" y="441" fill={OLIVE}>1天</text>
                </g>
                <line x1="1809" x2="1828" y1="410.500" y2="410.500" stroke={OLIVE} />
              </Plot>
            </PanelBody>
          </Panel>

          <Panel as="div">
            <AxisLabels size={11} list={[[36, "2000.000"], [68, "0.000"], [99, "-2000.000"], [131, "-4000.000"]]} />
            <PanelBody $topLine>
              <LegendRow
                title="OBV(30)"
                items={[
                  { text: "OBV -3787.000", color: WHITE, dir: "down", after: 6 },
                  { text: "MAOBV -3448.833", color: OLIVE, dir: "down" },
                ]}
              />
              <Plot height="129">
                <Grid rows={[20.5, 52.5, 83.5, 115.5]} />
                <Line knots={pairs(OBV)} y={obvY} color={WHITE} />
                <Line knots={pairs(MAOBV)} y={obvY} color={OLIVE} />
                <Marks list={OBV_MARKS} size={12} dy={557} />
              </Plot>
            </PanelBody>
          </Panel>

          <Panel as="div">
            <AxisLabels list={[[20, "0.020"], [76, "0.000"], [132, "-0.020"]]} />
            <PanelBody $topLine>
              <LegendRow
                title="MACD副图提示"
                items={[
                  { text: "DIFF -0.001", color: WHITE, dir: "down" },
                  { text: "DEA 0.000", color: OLIVE, dir: "down", after: 4 },
                  { text: "MACD -0.002", color: WHITE, dir: "down" },
                ]}
              />
              <Plot height="161">
                <Grid rows={[4.5, 60.5, 116.5]} />
                <g shapeRendering="crispEdges">
                  {HISTOGRAM.map((v, i) => (
                    <line key={i} x1={barX(i)} x2={barX(i)} y1="60" y2={Math.round(macdY(v))} stroke={v > 0 ? UP : DOWN} />
                  ))}
                </g>
                <Line knots={pairs(DIFF)} y={macdY} color={WHITE} />
                <Line knots={pairs(DEA)} y={macdY} color={OLIVE} />
                <Marks list={MACD_MARKS} size={12} dy={702} />
              </Plot>
            </PanelBody>
          </Panel>

          <Panel as="div">
            <AxisLabels list={[[19, "120"], [30, "100"], [42, "80"], [60, "50"], [78, "20"], [90, "0"], [102, "-20"]]} />
            <PanelBody $topLine>
              <LegendRow
                title="KDJ提示副图"
                items={[
                  { text: "K 18.220", color: WHITE, dir: "down", after: 6 },
                  { text: "D 38.444", color: OLIVE, dir: "down", after: 4 },
                  { text: "J -22.227", color: PINK, dir: "down", after: 6 },
                  { text: "JI 0.000", color: WHITE, after: 10 },
                  { text: "SI 0.000", color: WHITE },
                ]}
              />
              <Plot height="92">
                <Grid rows={[3.5, 14.5, 26.5, 44.5, 62.5, 74.5, 86.5]} />
                <Line knots={KDJ.k} y={kdjY} color={WHITE} />
                <Line knots={KDJ.d} y={kdjY} color={OLIVE} />
                <Line knots={KDJ.j} y={kdjY} color={PINK} />
                <Marks list={KDJ_MARKS} size={12} dy={879} />
              </Plot>
            </PanelBody>
          </Panel>

          <TimeAxis>
            <Plot height="19">
              <Marks
                list={[[290, 9, "10:00", "#868686"], [920, 9, "13:00", "#868686"], [1340, 9, "14:00", "#868686"], [1753, 9, "15:00", "#868686"]]}
                size={12}
                font={UI_FONT}
                dx={80}
                dy={0}
              />
            </Plot>
          </TimeAxis>
        </Main>

        <Rail>
          <Corner width="10" height="11"><path d="M0 0h10v11z" fill={RED} /></Corner>
        </Rail>
      </Workspace>

      <BottomBar>
        <BoardTab $cjk $active>我的板块</BoardTab>
        {BOARDS.map((b) => (
          <BoardTab key={b} $cjk={hasCjk(b)}>{b}</BoardTab>
        ))}
        <AddButton aria-label="添加板块">
          <svg width="10" height="10" stroke="#d2d2d2" strokeWidth="2"><path d="M5 0v10M0 5h10" /></svg>
        </AddButton>
        <Forum href="#forum">
          <svg width="20" height="16" fill="none" stroke="#ff7814" strokeWidth="1.500">
            <path d="M4 12q-1-10 6-10t6 10M4 8q-3 0-3 3.500T4 15M16 8q3 0 3 3.500T16 15" />
            <path d="M4 8v7M16 8v7" strokeWidth="2" />
          </svg>
          论坛提问
        </Forum>
      </BottomBar>
      <DockHandle />
    </Page>
  );
}
